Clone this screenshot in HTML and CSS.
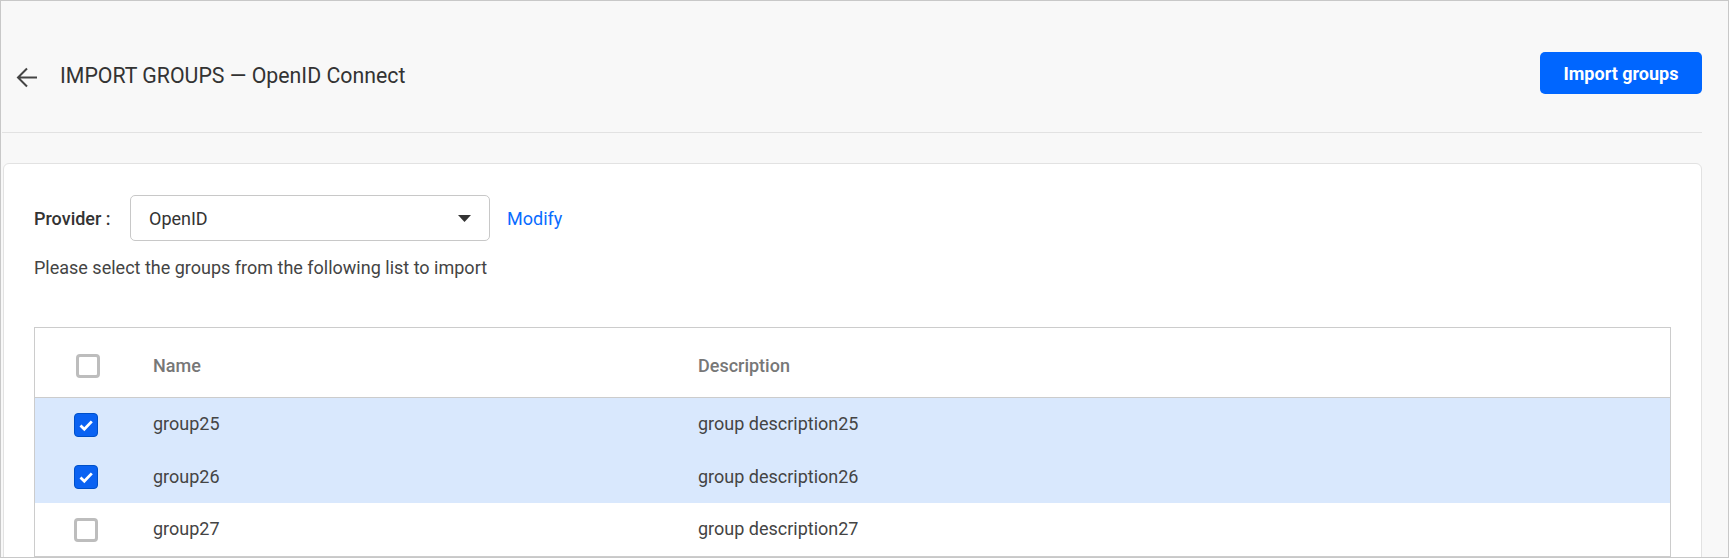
FILE: index.html
```html
<!DOCTYPE html>
<html lang="en">
<head>
<meta charset="utf-8">
<title>Import groups</title>
<link rel="stylesheet" href="styles.css">
</head>
<body>
<div class="frame">
  <header class="topbar">
    <div class="title-group">
      <svg class="back" width="22" height="22" viewBox="0 0 22 22" aria-hidden="true">
        <path d="M21 11.5H2.5M11 2.5L2 11.5L11 20.5" fill="none" stroke="#444" stroke-width="2"/>
      </svg>
      <h1 class="title">IMPORT GROUPS — OpenID Connect</h1>
    </div>
    <button class="primary">Import groups</button>
  </header>

  <section class="card">
    <div class="provider-row">
      <span class="label">Provider :</span>
      <div class="select">
        <span>OpenID</span>
        <svg class="caret" width="13" height="7" viewBox="0 0 13 7" aria-hidden="true"><path d="M0 0H13L6.5 7Z" fill="#333"/></svg>
      </div>
      <a class="link" href="#">Modify</a>
    </div>
    <p class="hint">Please select the groups from the following list to import</p>

    <div class="table">
      <div class="row head">
        <span class="cell-check"><span class="cb head-cb"></span></span>
        <span>Name</span>
        <span>Description</span>
      </div>
      <div class="row selected">
        <span class="cell-check"><span class="cb checked"><svg width="22" height="22" viewBox="0 0 22 22"><path d="M5.5 11.5L9.3 15.2L16.8 7.4" fill="none" stroke="#fff" stroke-width="2.8"/></svg></span></span>
        <span>group25</span>
        <span>group description25</span>
      </div>
      <div class="row selected">
        <span class="cell-check"><span class="cb checked"><svg width="22" height="22" viewBox="0 0 22 22"><path d="M5.5 11.5L9.3 15.2L16.8 7.4" fill="none" stroke="#fff" stroke-width="2.8"/></svg></span></span>
        <span>group26</span>
        <span>group description26</span>
      </div>
      <div class="row">
        <span class="cell-check"><span class="cb"></span></span>
        <span>group27</span>
        <span>group description27</span>
      </div>
    </div>
  </section>
</div>
</body>
</html>
```

FILE: styles.css
```css
* { box-sizing: border-box; }

html, body {
  margin: 0;
  padding: 0;
  background: #f8f8f8;
}

body {
  font-family: Roboto, "Liberation Sans", Arial, sans-serif;
  font-size: 18px;
  color: #333;
}

.frame {
  width: 1729px;
  height: 558px;
  border: 1px solid #c8c8c8;
  background: #f8f8f8;
  overflow: hidden;
}

.topbar {
  display: flex;
  justify-content: space-between;
  align-items: flex-start;
  height: 132px;
  padding-top: 51px;
  margin: 0 26px 0 1px;
  border-bottom: 1px solid #e2e2e2;
}

.title-group {
  display: flex;
  align-items: flex-start;
  margin-top: 12px;
}

.back {
  display: block;
  margin: 2px 0 0 14px;
}

.title {
  margin: 0 0 0 22px;
  font-size: 21.3px;
  line-height: 24px;
  font-weight: 400;
  color: #333;
}

.primary {
  width: 162px;
  height: 42px;
  border: none;
  border-radius: 5px;
  background: #0066ff;
  color: #fff;
  font-family: inherit;
  font-size: 18px;
  font-weight: 700;
  padding: 0;
}

.card {
  margin: 30px 26px 0 2px;
  height: 500px;
  background: #fff;
  border: 1px solid #e2e2e2;
  border-radius: 6px;
  padding: 31px 30px 0 30px;
}

.provider-row {
  display: flex;
  align-items: center;
  height: 46px;
}

.label {
  width: 96px;
  font-weight: 500;
  color: #333;
}

.select {
  width: 360px;
  height: 46px;
  border: 1px solid #c8c8c8;
  border-radius: 5px;
  display: flex;
  align-items: center;
  justify-content: space-between;
  padding: 0 18px 0 18px;
  color: #333;
}

.caret { display: block; }

.link {
  margin-left: 17px;
  color: #0a6cff;
  text-decoration: none;
}

.hint {
  margin: 15px 0 0;
  line-height: 24px;
  color: #444;
}

.table {
  margin-top: 47px;
  border: 1px solid #cccccc;
}

.row {
  display: grid;
  grid-template-columns: 118px 545px 1fr;
  align-items: center;
  height: 52.5px;
  color: #444;
  line-height: 24px;
}

.row.head {
  height: 70px;
  padding-top: 7px;
  border-bottom: 1px solid #cccccc;
  color: #777;
  font-weight: 500;
}

.row.selected {
  background: #d9e8fd;
}

.cell-check {
  display: flex;
  align-items: center;
  padding-left: 39px;
}

.cb {
  width: 24px;
  height: 24px;
  border: 3px solid #bdbdbd;
  border-radius: 4px;
  background: #fff;
  display: flex;
  align-items: center;
  justify-content: center;
  margin-top: 1px;
}

.cb.head-cb {
  margin-left: 2px;
  margin-top: 0;
}

.cb.checked {
  background: #0a62f2;
  border: 1px solid #0050c8;
}

.cb svg { display: block; }
```
